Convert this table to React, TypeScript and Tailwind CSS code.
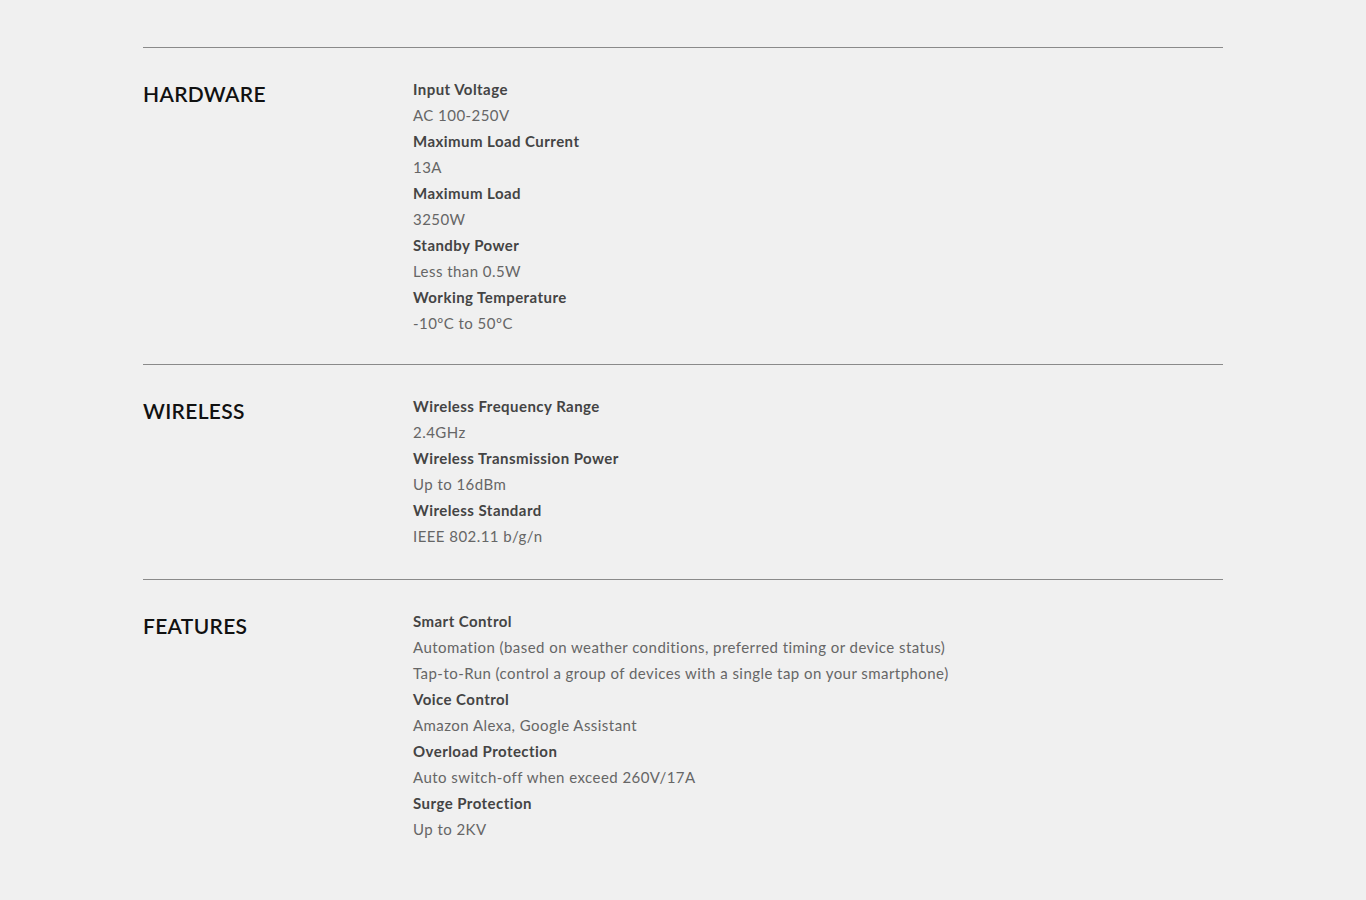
import React from "react";

type Item = { label: string; values: string[] };
type Section = { title: string; items: Item[]; pb: string };

const sections: Section[] = [
  {
    title: "HARDWARE",
    pb: "pb-[28px]",
    items: [
      { label: "Input Voltage", values: ["AC 100-250V"] },
      { label: "Maximum Load Current", values: ["13A"] },
      { label: "Maximum Load", values: ["3250W"] },
      { label: "Standby Power", values: ["Less than 0.5W"] },
      { label: "Working Temperature", values: ["-10ºC to 50ºC"] },
    ],
  },
  {
    title: "WIRELESS",
    pb: "pb-[30px]",
    items: [
      { label: "Wireless Frequency Range", values: ["2.4GHz"] },
      { label: "Wireless Transmission Power", values: ["Up to 16dBm"] },
      { label: "Wireless Standard", values: ["IEEE 802.11 b/g/n"] },
    ],
  },
  {
    title: "FEATURES",
    pb: "pb-[28px]",
    items: [
      {
        label: "Smart Control",
        values: [
          "Automation (based on weather conditions, preferred timing or device status)",
          "Tap-to-Run (control a group of devices with a single tap on your smartphone)",
        ],
      },
      { label: "Voice Control", values: ["Amazon Alexa, Google Assistant"] },
      { label: "Overload Protection", values: ["Auto switch-off when exceed 260V/17A"] },
      { label: "Surge Protection", values: ["Up to 2KV"] },
    ],
  },
];

export default function App() {
  return (
    <div
      className="min-h-[900px] w-full bg-[#f0f0f0] pt-[47px]"
      style={{ fontFamily: "Lato, 'Open Sans', sans-serif" }}
    >
      <div className="mx-auto w-[1080px]">
        {sections.map((s) => (
          <div key={s.title} className={`flex border-t border-[#8a8a8a] pt-[28px] ${s.pb}`}>
            <div className="w-[270px] shrink-0 pt-[5px]">
              <h2 className="text-[21px] leading-[26px] font-semibold tracking-[0.015em] text-[#111]">
                {s.title}
              </h2>
            </div>
            <div className="flex flex-col">
              {s.items.map((it) => (
                <React.Fragment key={it.label}>
                  <div className="text-[15px] leading-[26px] font-bold tracking-[0.03em] text-[#444]">
                    {it.label}
                  </div>
                  {it.values.map((v) => (
                    <div key={v} className="text-[15px] leading-[26px] tracking-[0.03em] text-[#666]">
                      {v}
                    </div>
                  ))}
                </React.Fragment>
              ))}
            </div>
          </div>
        ))}
      </div>
    </div>
  );
}
